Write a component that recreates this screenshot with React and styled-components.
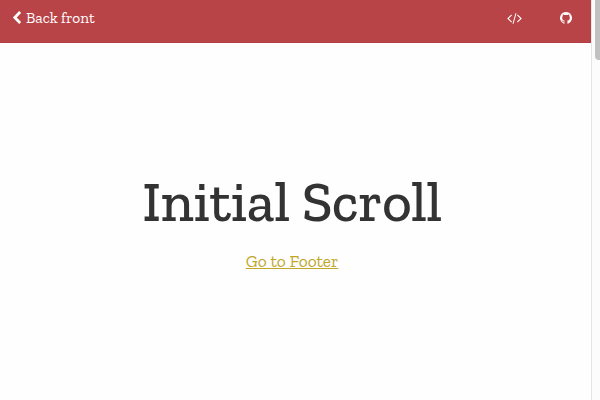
import React from 'react';
import styled, { createGlobalStyle } from 'styled-components';

const Global = createGlobalStyle`
  * { box-sizing: border-box; }
  body {
    margin: 0;
    overflow: hidden;
    background: #fefefe;
    font-family: "Zilla Slab", "Roboto Serif", "Noto Serif", "DejaVu Serif", serif;
  }
`;

const Page = styled.div`
  display: flex;
  width: 600px;
  height: 400px;
`;

const Content = styled.div`
  display: flex;
  flex-direction: column;
  width: 591px;
`;

const Header = styled.header`
  display: flex;
  align-items: flex-start;
  justify-content: space-between;
  height: 43px;
  padding: 9px 19px 0 12px;
  background: #b94448;
  border-bottom: 1px solid #b33e43;
  color: #fff;
`;

const Back = styled.a`
  display: flex;
  align-items: center;
  height: 18px;
  font-size: 15.4px;
  line-height: 18px;
  letter-spacing: -0.05px;
`;

const Icon = styled.svg`
  display: block;
  width: ${p => p.$width}px;
  height: 14px;
  margin-right: ${p => p.$gap || 0}px;
  fill: currentColor;
`;

const Actions = styled.nav`
  display: flex;
  align-items: center;
  gap: 38.5px;
  height: 18px;
`;

const Main = styled.main`
  display: flex;
  flex-direction: column;
  align-items: center;
  padding: 129px 7px 0 0;
`;

const Title = styled.h1`
  margin: 0;
  font-size: 57px;
  line-height: 60px;
  font-weight: 500;
  letter-spacing: -0.3px;
  color: #333;
`;

const FooterLink = styled.a`
  margin-top: 17px;
  font-size: 17.4px;
  line-height: 24px;
  letter-spacing: -0.08px;
  color: #c0a72c;
  text-decoration: underline;
  text-decoration-thickness: 1px;
  text-underline-offset: 1px;
`;

const Track = styled.div`
  width: 9px;
  padding-left: 3px;
  border-left: 1px solid #e5e5e5;
  background: #fcfcfc;
`;

const Thumb = styled.div`
  height: 60px;
  background: #c1c1c1;
  border-radius: 0 0 0 4px;
`;

export default function App() {
  return (
    <Page>
      <Global />
      <Content>
        <Header>
          <Back>
            <Icon $width={10} $gap={4} viewBox="288 0 1280 1792">
              <path d="M1427 301l-531 531 531 531q19 19 19 45t-19 45l-166 166q-19 19-45 19t-45-19l-742-742q-19-19-19-45t19-45l742-742q19-19 45-19t45 19l166 166q19 19 19 45t-19 45z" />
            </Icon>
            Back front
          </Back>
          <Actions>
            <Icon $width={15} viewBox="0 0 1920 1792">
              <path d="M617 1399l-50 50q-10 10-23 10t-23-10l-466-466q-10-10-10-23t10-23l466-466q10-10 23-10t23 10l50 50q10 10 10 23t-10 23l-393 393 393 393q10 10 10 23t-10 23zm591-1067l-373 1291q-4 13-15.5 19.5t-23.5 2.5l-62-17q-13-4-19.5-15.5t-2.5-24.5l373-1291q4-13 15.5-19.5t23.5-2.5l62 17q13 4 19.5 15.5t2.5 24.5zm657 651l-466 466q-10 10-23 10t-23-10l-50-50q-10-10-10-23t10-23l393-393-393-393q-10-10-10-23t10-23l50-50q10-10 23-10t23 10l466 466q10 10 10 23t-10 23z" />
            </Icon>
            <Icon $width={12} viewBox="128 0 1536 1792">
              <path d="M896 128q209 0 385.5 103t279.5 279.5 103 385.5q0 251-146.5 451.5t-378.5 277.5q-27 5-40-7t-13-30q0-3 .5-76.5t.5-134.5q0-97-52-142 57-6 102.5-18t94-39 81-66.5 53-105 20.5-150.5q0-119-79-206 37-91-8-204-28-9-81 11t-92 44l-38 24q-93-26-192-26t-192 26q-16-11-42.5-27t-83.5-38.5-85-13.5q-45 113-8 204-79 87-79 206 0 85 20.5 150t52.5 105 80.5 67 94 39 102.5 18q-39 36-49 103-21 10-45 15t-57 5-65.5-21.5-55.5-62.5q-19-32-48.5-52t-49.5-24l-20-3q-21 0-29 4.5t-5 11.5 9 14 13 12l7 5q22 10 43.5 38t31.5 51l10 23q13 38 44 61.5t67 30 69.5 7 55.5-3.5l23-4q0 38 .5 88.5t.5 54.5q0 18-13 30t-40 7q-232-77-378.5-277.5t-146.5-451.5q0-209 103-385.5t279.5-279.5 385.5-103z" />
            </Icon>
          </Actions>
        </Header>
        <Main>
          <Title>Initial Scroll</Title>
          <FooterLink>Go to Footer</FooterLink>
        </Main>
      </Content>
      <Track><Thumb /></Track>
    </Page>
  );
}
